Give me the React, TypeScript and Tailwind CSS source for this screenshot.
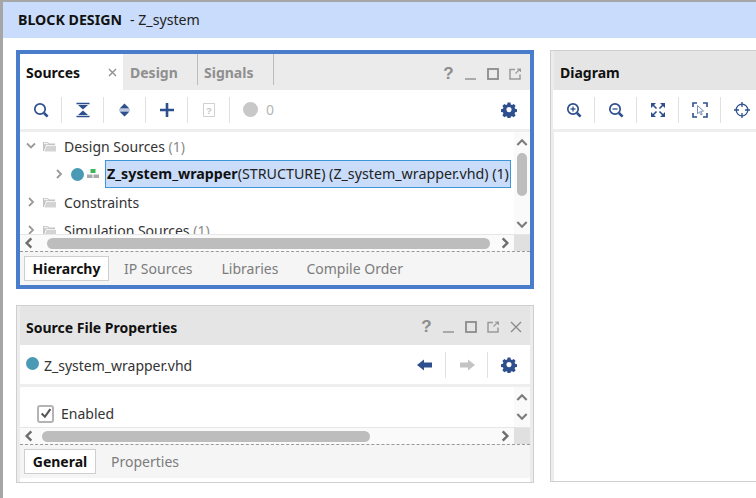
import React from "react";

const NAVY = "#2d4f8e";

const Sep = () => <div className="h-[26px] w-px bg-[#e0e0e0]" />;

const ToolCell = ({ children }: { children: React.ReactNode }) => (
	<div className="flex h-[26px] w-[41px] items-center justify-center">{children}</div>
);

const Icon = ({ children, size = 16 }: { children: React.ReactNode; size?: number }) => (
	<svg width={size} height={size} viewBox="0 0 16 16" fill="none">
		{children}
	</svg>
);

const Search = ({ mark }: { mark?: "plus" | "minus" }) => (
	<Icon>
		<circle cx="7" cy="7" r="5.2" stroke={NAVY} strokeWidth="1.7" />
		<path d="M11 11l3.6 3.6" stroke={NAVY} strokeWidth="2.6" />
		{mark && <path d="M4.5 7h5" stroke={NAVY} strokeWidth="1.3" />}
		{mark === "plus" && <path d="M7 4.5v5" stroke={NAVY} strokeWidth="1.3" />}
	</Icon>
);

const Gear = () => (
	<Icon>
		<path
			fill={NAVY}
			fillRule="evenodd"
			d="M6.5 1h3l.4 2 1.3.6 1.8-1.1 2 2.1-1.1 1.7.5 1.3 2 .4v2.9l-2 .4-.5 1.3 1.1 1.8-2 2-1.8-1.1-1.3.5-.4 2h-3l-.4-2-1.3-.5-1.7 1.1-2.1-2 1.1-1.8-.5-1.3-2-.4V8l2-.4.5-1.3-1.1-1.7 2.1-2.1 1.7 1.1 1.3-.6zM8 5.7a2.7 2.7 0 1 0 0 5.4 2.7 2.7 0 0 0 0-5.4z"
			transform="translate(.4 -.4) scale(.95)"
		/>
	</Icon>
);

const Chevron = ({ dir, color = "#7b7b7b", size = 12, width = 1.8 }: { dir: "up" | "down" | "left" | "right"; color?: string; size?: number; width?: number }) => {
	const d = {
		up: "M2 8.5l4-4 4 4",
		down: "M2 3.5l4 4 4-4",
		left: "M8 2L4 6l4 4",
		right: "M4 2l4 4-4 4",
	}[dir];
	return (
		<svg width={size} height={size} viewBox="0 0 12 12" fill="none">
			<path d={d} stroke={color} strokeWidth={width} />
		</svg>
	);
};

const Folder = () => (
	<svg width="13" height="11" viewBox="0 0 13 11">
		<path d="M0 1h5l1 1.5h6V4H3L1 10H0z" fill="#c4c4c4" />
		<path d="M3.5 4.8H13V10.5H1.5z" fill="#d4d4d4" />
		<path d="M1 1.8h3.6l.9 1.4H1z" fill="#f2f2f2" />
	</svg>
);

const WinControls = ({ close }: { close?: boolean }) => (
	<div className="flex items-center text-[#8c8c8c]">
		<span className="mt-[-1px] w-[13px] text-center font-['Liberation_Sans',sans-serif] text-[17px] font-bold leading-none">?</span>
		<svg className="ml-[10px]" width="12" height="12" viewBox="0 0 12 12">
			<path d="M0 11h11" stroke="#9a9a9a" strokeWidth="1.6" />
		</svg>
		<svg className="ml-[10px]" width="12" height="12" viewBox="0 0 12 12">
			<rect x="1" y="1" width="10" height="10" fill="none" stroke="#8c8c8c" strokeWidth="1.8" />
		</svg>
		<svg className="ml-[10px]" width="12" height="12" viewBox="0 0 12 12" fill="none">
			<path d="M6 1.5H1v9.5h10V6.5" stroke="#9a9a9a" strokeWidth="1.5" />
			<path d="M6.5 5.5L11 1M8 1h3.5v3" stroke="#9a9a9a" strokeWidth="1.2" />
		</svg>
		{close && (
			<svg className="ml-[11px]" width="12" height="12" viewBox="0 0 12 12" fill="none">
				<path d="M1 1l10 10M11 1L1 11" stroke="#8c8c8c" strokeWidth="1.4" />
			</svg>
		)}
	</div>
);

const BottomTabs = ({ children }: { children: React.ReactNode }) => (
	<div className="flex h-[34px] items-center border-t border-dashed border-t-[#9a9a9a] bg-[#f5f5f5] pl-1 text-[#7c7c7c]">
		{children}
	</div>
);

const ActiveTab = ({ label, width }: { label: string; width: string }) => (
	<div className={`flex h-[25px] ${width} items-center justify-center border border-[#cfcfcf] bg-white font-bold text-[#111]`}>
		{label}
	</div>
);

const HScroll = ({ thumb, offset }: { thumb: string; offset: string }) => (
	<div className="flex h-[17px] shrink-0 items-stretch border-t border-[#e6e6e6] bg-[#fafafa]">
		<div className="flex w-[27px] shrink-0 items-center pl-[2px]">
			<Chevron dir="left" color="#6e6e6e" size={14} width={2.1} />
		</div>
		<div className={`flex flex-1 items-center ${offset}`}>
			<div className={`h-[11px] ${thumb} rounded-full bg-[#bdbdbd]`} />
		</div>
		<div className="flex w-[22px] shrink-0 items-center justify-end pr-[2px]">
			<Chevron dir="right" color="#6e6e6e" size={14} width={2.1} />
		</div>
		<div className="w-[16px] shrink-0 bg-[#e0e0e0]" />
	</div>
);

function SourcesPanel() {
	return (
		<section className="h-[239px] border-4 border-[#4a7ccc] bg-white">
			<div className="flex h-9 items-stretch bg-[#ebebeb]">
				<div className="flex w-[103px] items-center justify-between bg-white pl-[6px] pr-[6px] font-bold text-[#111]">
					<span>Sources</span>
					<svg width="9" height="9" viewBox="0 0 9 9" fill="none">
						<path d="M1 1l7 7M8 1L1 8" stroke="#8c8c8c" strokeWidth="1.3" />
					</svg>
				</div>
				<div className="mb-[5px] flex w-[75px] items-center border-r border-[#bdbdbd] pl-[7px] pt-[5px] font-bold text-[#8f8f8f]">Design</div>
				<div className="mb-[5px] flex w-[76px] items-center border-r border-[#bdbdbd] pl-[6px] pt-[5px] font-bold text-[#8f8f8f]">Signals</div>
				<div className="ml-auto flex items-center pr-[9px] pt-[4px]">
					<WinControls />
				</div>
			</div>
			<div className="flex h-[42px] items-center border-b-[3px] border-[#eeeeee] pr-[13px]">
				<ToolCell><Search /></ToolCell>
				<Sep />
				<ToolCell>
					<Icon>
						<path d="M1.5 1.500h13M1.500 14.500h13" stroke={NAVY} strokeWidth="1.600" />
						<path d="M3 3h10L8 7.400zM3 13h10L8 8.600z" fill={NAVY} />
					</Icon>
				</ToolCell>
				<Sep />
				<ToolCell>
					<Icon>
						<path d="M2.500 6.500L7.500 1.500l5 5zM2.500 9.500h10l-5 5z" fill={NAVY} />
						<path d="M2 7.300h11v1.400H2z" fill="#9fb2d4" />
					</Icon>
				</ToolCell>
				<Sep />
				<ToolCell>
					<Icon>
						<path d="M8 1v14M1 8h14" stroke={NAVY} strokeWidth="2.600" />
					</Icon>
				</ToolCell>
				<Sep />
				<ToolCell>
					<svg width="12" height="14" viewBox="0 0 12 14" fill="none">
						<path d="M.5.5h11v13H.5z" stroke="#d0d0d0" />
						<text x="6" y="10.500" textAnchor="middle" fontSize="9" fontWeight="700" fill="#c4c4c4" fontFamily="Liberation Sans">?</text>
					</svg>
				</ToolCell>
				<Sep />
				<div className="flex items-center pl-[13px] text-[#b5b5b5]">
					<span className="h-[15px] w-[15px] rounded-full bg-[#c8c8c8]" />
					<span className="ml-[8px]">0</span>
				</div>
				<div className="ml-auto">
					<Gear />
				</div>
			</div>
			<div className="flex h-[102px]">
				<div className="min-w-0 flex-1 overflow-hidden text-[#333]">
					<div className="flex h-7 items-center pl-[5px]">
						<Chevron dir="down" color="#9a9a9a" />
						<span className="ml-[6px]"><Folder /></span>
						<span className="ml-[8px]">Design Sources <span className="text-[#8a8a8a]">(1)</span></span>
					</div>
					<div className="flex h-7 items-center pl-[33px]">
						<Chevron dir="right" color="#9a9a9a" />
						<span className="ml-[6px] h-[13px] w-[13px] rounded-full bg-[#4b9ab5]" />
						<svg className="ml-[3px]" width="12" height="10" viewBox="0 0 12 10">
							<path d="M3.500 0h5v4h-5z" fill="#3fb55a" />
							<path d="M0 5.500h5.500v3.500H0zM6.500 5.500H12v3.500H6.500z" fill="#a9a9a9" />
						</svg>
						<span className="ml-[6px] w-[406px] whitespace-nowrap border border-[#3c96d8] bg-[#c9ddfb] pl-px text-[14.25px] leading-[26px] text-[#222]">
							<b className="text-[#111]">Z_system_wrapper</b>(STRUCTURE) (Z_system_wrapper.vhd) (1)
						</span>
					</div>
					<div className="flex h-7 items-center pl-[5px]">
						<Chevron dir="right" color="#9a9a9a" />
						<span className="ml-[6px]"><Folder /></span>
						<span className="ml-[8px]">Constraints</span>
					</div>
					<div className="flex h-7 items-center pl-[5px]">
						<Chevron dir="right" color="#9a9a9a" />
						<span className="ml-[6px]"><Folder /></span>
						<span className="ml-[8px]">Simulation Sources <span className="text-[#8a8a8a]">(1)</span></span>
					</div>
				</div>
				<div className="flex w-[16px] shrink-0 flex-col items-center bg-[#fafafa] pt-[3px]">
					<Chevron dir="up" size={14} />
					<div className="mt-[4px] h-[43px] w-[10px] rounded-full bg-[#bdbdbd]" />
					<div className="mt-auto pb-[2px]">
						<Chevron dir="down" size={14} />
					</div>
				</div>
			</div>
			<HScroll thumb="w-[443px]" offset="" />
			<BottomTabs>
				<ActiveTab label="Hierarchy" width="w-[85px]" />
				<span className="ml-[15px]">IP Sources</span>
				<span className="ml-[29px]">Libraries</span>
				<span className="ml-[28px]">Compile Order</span>
			</BottomTabs>
		</section>
	);
}

function PropertiesPanel() {
	return (
		<section className="flex h-[178px] flex-col border-x-4 border-y border-x-[#ececec] border-y-[#cfcfcf] outline outline-[#cfcfcf] -outline-offset-1">
			<div className="flex h-[39px] shrink-0 items-center justify-between bg-[#e5e5e5] pl-[6px] pr-[8px] pt-[3px] font-bold text-[#111]">
				<span>Source File Properties</span>
				<WinControls close />
			</div>
			<div className="flex h-[39px] shrink-0 items-center bg-white pl-[6px] pr-[13px] pt-[1px] text-[#333]">
				<span className="mb-[3px] h-[13px] w-[13px] rounded-full bg-[#4b9ab5]" />
				<span className="ml-[5px]">Z_system_wrapper.vhd</span>
				<div className="ml-auto flex items-center">
					<svg width="16" height="12" viewBox="0 0 16 12">
						<path d="M0 6l7-5.500V3.500h8v5H7v3z" fill={NAVY} />
					</svg>
					<div className="ml-[12px] mr-[13px] h-[26px] w-px bg-[#e0e0e0]" />
					<svg width="16" height="12" viewBox="0 0 16 12">
						<path d="M16 6L9 .5V3.500H1v5h8v3z" fill="#c4c4c4" />
					</svg>
					<div className="ml-[12px] mr-[13px] h-[26px] w-px bg-[#e0e0e0]" />
					<Gear />
				</div>
			</div>
			<div className="flex h-[43px] shrink-0 border-t-[3px] border-[#eeeeee]">
				<div className="min-w-0 flex-1 overflow-hidden bg-white pl-[17px] pt-[16px] text-[#333]">
					<div className="flex items-center">
						<span className="flex h-[18px] w-[17px] items-center justify-center rounded-[3px] border-2 border-[#b4b4b4]">
							<svg width="12" height="11" viewBox="0 0 11 10" fill="none">
								<path d="M1.500 5l3 3 5-7" stroke="#555" strokeWidth="1.900" />
							</svg>
						</span>
						<span className="ml-[7px]">Enabled</span>
					</div>
				</div>
				<div className="flex w-[16px] shrink-0 flex-col items-center justify-between bg-[#fafafa] py-[3px]">
					<Chevron dir="up" size={14} />
					<Chevron dir="down" size={14} />
				</div>
			</div>
			<HScroll thumb="w-[328px]" offset="-ml-[5px]" />
			<BottomTabs>
				<ActiveTab label="General" width="w-[72px]" />
				<span className="ml-[15px]">Properties</span>
			</BottomTabs>
		</section>
	);
}

function DiagramPanel() {
	return (
		<section className="flex h-[432px] w-[300px] shrink-0 flex-col border-x-4 border-y border-x-[#ececec] border-y-[#cfcfcf] outline outline-[#cfcfcf] -outline-offset-1">
			<div className="flex h-[39px] shrink-0 items-center bg-[#e5e5e5] pl-[6px] pt-[3px] font-bold text-[#111]">Diagram</div>
			<div className="-ml-[1px] flex h-[42px] shrink-0 items-center border-b-[3px] border-[#eeeeee] bg-white">
				<ToolCell><Search mark="plus" /></ToolCell>
				<Sep />
				<ToolCell><Search mark="minus" /></ToolCell>
				<Sep />
				<ToolCell>
					<Icon>
						<path d="M1 1h5L1 6zM15 1v5L10 1zM1 15v-5l5 5zM15 15h-5l5-5z" fill={NAVY} />
						<path d="M3 3l3.500 3.500M13 3L9.500 6.500M3 13l3.500-3.500M13 13L9.500 9.500" stroke={NAVY} strokeWidth="1.600" />
					</Icon>
				</ToolCell>
				<Sep />
				<ToolCell>
					<Icon>
						<path d="M1 5V1h4M11 1h4v4M15 11v4h-4M5 15H1v-4" stroke={NAVY} strokeWidth="1.600" />
						<path d="M5.500 3.500l6 5.500-2.800.3 1.500 3-1.300.6-1.400-3-2 1.900z" fill="#fff" stroke="#7d90b5" />
					</Icon>
				</ToolCell>
				<Sep />
				<ToolCell>
					<Icon>
						<circle cx="8" cy="8" r="5.800" stroke={NAVY} strokeWidth="1.300" />
						<path d="M8 0v5M8 11v5M0 8h5M11 8h5" stroke={NAVY} strokeWidth="1.300" />
					</Icon>
				</ToolCell>
			</div>
			<div className="flex-1 bg-white" />
		</section>
	);
}

export default function App() {
	return (
		<div className="h-[498px] w-[756px] overflow-hidden bg-white font-['Noto_Sans',sans-serif] text-[14px]">
			<div className="h-[498px] border-l-[3px] border-t-2 border-l-[#a6a6a6] border-t-[#a6a6a6]">
				<div className="flex h-[36px] items-center bg-[#c9dcfb] pl-[15px] text-[14.2px] text-[#222]">
					<b className="text-[#111]">BLOCK DESIGN</b>
					<span className="ml-[8px]">- Z_system</span>
				</div>
				<div className="flex gap-4 pl-[13px] pt-3">
					<div className="flex w-[518px] shrink-0 flex-col gap-4">
						<SourcesPanel />
						<PropertiesPanel />
					</div>
					<DiagramPanel />
				</div>
			</div>
		</div>
	);
}
